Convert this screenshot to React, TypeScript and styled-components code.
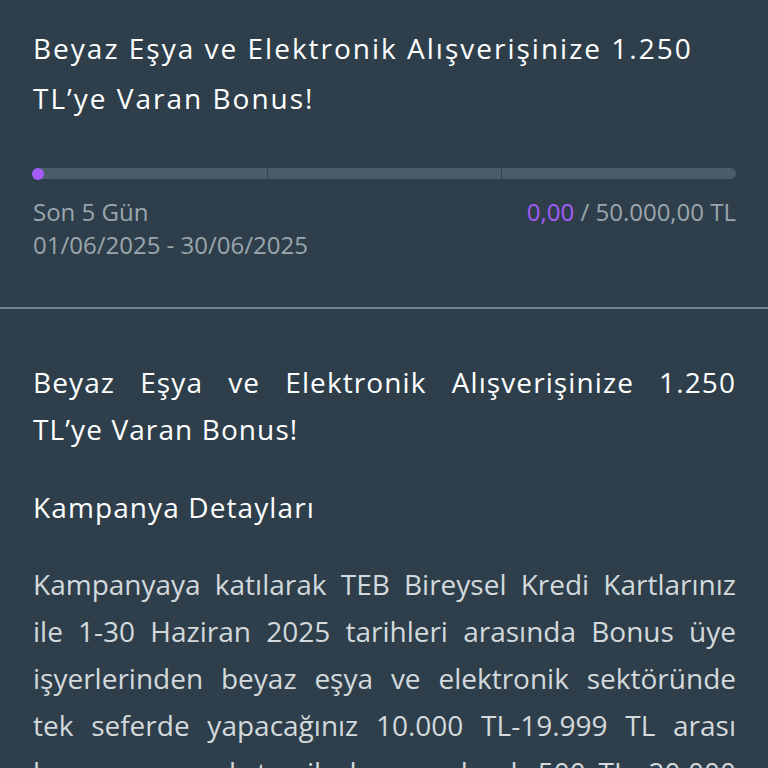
import React from 'react'
import styled, { createGlobalStyle } from 'styled-components'

const GlobalStyle = createGlobalStyle`
  html, body {
    margin: 0;
    padding: 0;
    background: #2e3f4b;
  }
  * {
    box-sizing: border-box;
  }
`

const segments = [0, 1, 2]

const titleLines = ['Beyaz Eşya ve Elektronik Alışverişinize 1.250', 'TL’ye Varan Bonus!']

const detailLines = [
  'Kampanyaya katılarak TEB Bireysel Kredi Kartlarınız',
  'ile 1-30 Haziran 2025 tarihleri arasında Bonus üye',
  'işyerlerinden beyaz eşya ve elektronik sektöründe',
  'tek seferde yapacağınız 10.000 TL-19.999 TL arası',
  'harcamanıza ekstre ile bonus olarak 500 TL, 20.000',
  'TL ve üzeri harcamanıza ise 1.250 TL Bonus kazanabilirsiniz.'
]

export default function App(): React.JSX.Element {
  return (
    <Page>
      <GlobalStyle />
      <Header>
        <HeaderTitle>
          Beyaz Eşya ve Elektronik Alışverişinize 1.250 TL’ye Varan Bonus!
        </HeaderTitle>

        <Progress>
          {segments.map((s) => (
            <Segment key={s} />
          ))}
          <Dot />
        </Progress>

        <Meta>
          <MetaLeft>
            <MetaText>Son 5 Gün</MetaText>
            <MetaText>01/06/2025 - 30/06/2025</MetaText>
          </MetaLeft>
          <MetaText>
            <Spent>0,00</Spent> / 50.000,00 TL
          </MetaText>
        </Meta>
      </Header>

      <Divider />

      <Body>
        <BodyTitle>
          {titleLines.map((line, i) => (
            <Line key={line} $last={i === titleLines.length - 1}>
              {line}
            </Line>
          ))}
        </BodyTitle>
        <SectionHeading>Kampanya Detayları</SectionHeading>
        <Paragraph>
          {detailLines.map((line, i) => (
            <Line key={line} $last={i === detailLines.length - 1}>
              {line}
            </Line>
          ))}
        </Paragraph>
      </Body>
    </Page>
  )
}

const Page = styled.div`
  width: 768px;
  height: 768px;
  overflow: hidden;
  background: #2e3f4b;
  font-family: 'Open Sans', Lato, sans-serif;
`

const Header = styled.div`
  padding: 23px 32px 46px 33px;
`

const HeaderTitle = styled.h1`
  margin: 0;
  font-size: 28px;
  font-weight: 500;
  letter-spacing: 2px;
  line-height: 50px;
  color: #ffffff;
`

const Progress = styled.div`
  position: relative;
  display: flex;
  margin-top: 45px;
  height: 11px;
`

const Segment = styled.div`
  flex: 1;
  background: #4a5c67;
  border-right: 1px solid #34454f;

  &:first-child {
    border-radius: 6px 0 0 6px;
  }

  &:nth-child(3) {
    border-right: none;
    border-radius: 0 6px 6px 0;
  }
`

const Dot = styled.span`
  position: absolute;
  left: -1px;
  top: -0.5px;
  width: 12px;
  height: 12px;
  border-radius: 50%;
  background: #a35cf5;
`

const Meta = styled.div`
  display: flex;
  justify-content: space-between;
  align-items: flex-start;
  margin-top: 16px;
`

const MetaLeft = styled.div`
  display: flex;
  flex-direction: column;
`

const MetaText = styled.div`
  font-size: 24px;
  line-height: 33px;
  color: #9aa6ad;
`

const Spent = styled.span`
  color: #a35cf5;
`

const Divider = styled.div`
  height: 2px;
  background: #75858f;
`

const Body = styled.div`
  padding: 50px 32px 0 33px;
`

const Line = styled.span<{ $last: boolean }>`
  display: block;
  text-align: justify;
  text-align-last: ${(p) => (p.$last ? 'left' : 'justify')};
  white-space: nowrap;
`

const BodyTitle = styled.h2`
  margin: 0;
  font-size: 28px;
  font-weight: 400;
  letter-spacing: 1.1px;
  line-height: 47px;
  color: #ffffff;
`

const SectionHeading = styled.h3`
  margin: 31px 0 0;
  font-size: 28px;
  font-weight: 400;
  letter-spacing: 1.1px;
  line-height: 47px;
  color: #ffffff;
`

const Paragraph = styled.p`
  margin: 30px 0 0;
  font-size: 28px;
  line-height: 47px;
  color: #d3d9dc;
`
